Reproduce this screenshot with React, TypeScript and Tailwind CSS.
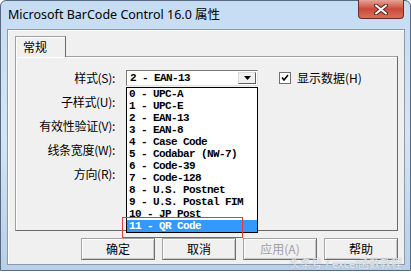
import React from 'react';

// Windows 7 style property dialog with an open combobox list
const ITEMS = [
  '0 - UPC-A',
  '1 - UPC-E',
  '2 - EAN-13',
  '3 - EAN-8',
  '4 - Case Code',
  '5 - Codabar (NW-7)',
  '6 - Code-39',
  '7 - Code-128',
  '8 - U.S. Postnet',
  '9 - U.S. Postal FIM',
  '10 - JP Post',
  '11 - QR Code',
];

const LABELS = ['样式(S):', '子样式(U):', '有效性验证(V):', '线条宽度(W):', '方向(R):'];

const mono = "font-['Liberation_Mono',monospace] font-bold text-[11px] tracking-[-0.6px] leading-[12px]";

const Btn: React.FC<{ label: string; disabled?: boolean }> = ({ label, disabled }) => (
  <div className="w-[74px] h-[22px] border border-[#a3a3a3] border-r-[#6e6e6e] border-b-[#6e6e6e] bg-[#f0f0f0] shadow-[inset_1px_1px_0_#ffffff,inset_-1px_-1px_0_#c8c8c8] flex items-center justify-center">
    <span className={`font-['Noto_Sans_CJK_SC',sans-serif] text-[12px] ${disabled ? 'text-[#a0a0a0]' : 'text-black'}`}>{label}</span>
  </div>
);

export default function App() {
  return (
    <div className="w-[411px] h-[273px] bg-white overflow-hidden font-['Noto_Sans','Noto_Sans_CJK_SC',sans-serif]">
      <div className="w-[411px] h-[271px] rounded-t-[6px] border border-[#5a6a7e] bg-gradient-to-b from-[#c6dcf3] via-[#d3e5f8] to-[#b7cfe9] flex flex-col pl-[6px] pr-[5px] pb-[5px]">
        {/* Title bar */}
        <div className="h-[28px] flex items-start justify-between">
          <span className="pl-[1px] pt-[5px] text-[12.5px] leading-[18px] text-black">Microsoft BarCode Control 16.0 属性</span>
          <div className="w-[46px] h-[19px] -mt-px mr-[1px] rounded-b-[4px] border border-[#6b2b22] border-t-0 bg-gradient-to-b from-[#e5a497] via-[#c9493a] to-[#d7715c] flex items-center justify-center">
            <svg width="14" height="11" viewBox="0 0 14 11">
              <path d="M2 1.5 L12 9.5 M12 1.5 L2 9.5" stroke="#5a2a22" strokeWidth="4" strokeLinecap="round" />
              <path d="M2 1.5 L12 9.5 M12 1.5 L2 9.5" stroke="#ffffff" strokeWidth="2" strokeLinecap="round" />
            </svg>
          </div>
        </div>

        {/* Client area */}
        <div className="flex-1 border border-[#8b9aab] bg-[#f0f0f0] shadow-[inset_1px_1px_0_#ffffff] flex flex-col pl-[7px] pt-[6px] relative">
          {/* Tab */}
          <div className="relative z-10 -mb-px w-[51px] h-[21px] border border-[#a0a0a0] border-b-0 border-r-[#696969] bg-[#f0f0f0] shadow-[inset_1px_1px_0_#ffffff] flex items-center pl-[7px]">
            <span className="font-['Noto_Sans_CJK_SC',sans-serif] text-[12px] leading-none">常规</span>
          </div>

          {/* Panel */}
          <div className="relative w-[383px] h-[175px] border border-[#a0a0a0] border-r-[#696969] border-b-[#696969] shadow-[inset_1px_1px_0_#ffffff] pt-[9px] font-['Noto_Sans_CJK_SC',sans-serif] text-[12px]">
            {LABELS.map((label, i) => (
              <div key={label} className="h-[24px] flex items-center">
                <span className="w-[99px] text-right leading-none tracking-[-0.3px]">{label}</span>
                {i === 0 && (
                  <>
                    <div className="ml-[11px] w-[132px] h-[16px] border border-[#7a7a7a] border-r-[#e3e3e3] border-b-[#e3e3e3] bg-white flex items-center">
                      <span className={`${mono} pl-[3px] flex-1 text-black`}>2 - EAN-13</span>
                      <div className="w-[18px] h-[12px] mr-[1px] border border-[#dcdcdc] border-r-[#5e5e5e] border-b-[#5e5e5e] bg-[#f0f0f0] flex items-center justify-center">
                        <svg width="7" height="4" viewBox="0 0 7 4">
                          <path d="M0 0 H7 L3.5 4 Z" fill="#000" />
                        </svg>
                      </div>
                    </div>
                    <div className="ml-[21px] w-[12px] h-[12px] border border-[#707070] bg-white flex items-center justify-center">
                      <svg width="8" height="8" viewBox="0 0 8 8">
                        <path d="M1 3.5 L3 6 L7 1" stroke="#000" strokeWidth="1.6" fill="none" />
                      </svg>
                    </div>
                    <span className="ml-[6px] leading-none">显示数据(H)</span>
                  </>
                )}
              </div>
            ))}

            {/* Open combobox list */}
            <div className="absolute left-[110px] top-[30px] w-[132px] h-[146px] border border-black bg-white z-20">
              {ITEMS.map((item, i) => (
                <div
                  key={item}
                  className={`h-[12px] pl-[2px] ${mono} whitespace-pre ${i === ITEMS.length - 1 ? 'bg-[#3399ff] text-white' : 'text-black'}`}
                >
                  {item}
                </div>
              ))}
            </div>

            {/* Red highlight box */}
            <div className="absolute left-[106px] top-[160px] w-[121px] h-[21px] border border-[#e8393a] z-30" />
          </div>

          {/* Buttons */}
          <div className="w-[383px] mt-[7px] flex justify-end gap-[7px]">
            <Btn label="确定" />
            <Btn label="取消" />
            <Btn label="应用(A)" disabled />
            <Btn label="帮助" />
          </div>

          <span className="absolute right-[2px] bottom-[-5px] text-[11px] text-white/80 [text-shadow:0_0_1px_#8090a0] leading-none">头条号 / excel函数教程</span>
        </div>
      </div>
    </div>
  );
}
